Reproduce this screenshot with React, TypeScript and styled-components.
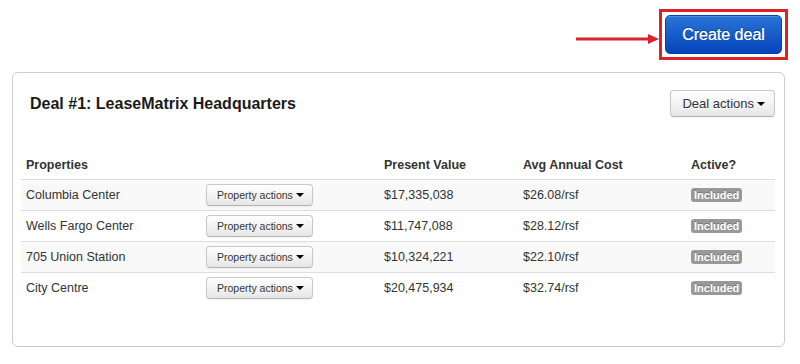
import React from "react";
import styled, { createGlobalStyle } from "styled-components";

const GlobalStyle = createGlobalStyle`
  html, body { margin: 0; padding: 0; background: #ffffff; }
  body {
    font-family: "Liberation Sans", Arial, Helvetica, sans-serif;
    color: #333333;
    -webkit-font-smoothing: antialiased;
  }
  * { box-sizing: border-box; }
`;

const Page = styled.div`
  width: 800px;
  padding: 0 12px;
`;

const TopBar = styled.div`
  display: flex;
  justify-content: flex-end;
  align-items: flex-start;
  padding-top: 9px;
`;

const ArrowSvg = styled.svg`
  display: block;
  margin-top: 24px;
`;

const Highlight = styled.div`
  border: 3px solid #dc2226;
  padding: 3px;
  display: flex;
`;

const PrimaryButton = styled.button`
  width: 117px;
  height: 39px;
  border: 1px solid #0a3fae;
  border-radius: 5px;
  background: linear-gradient(#2a74d6, #0444bd);
  color: #ffffff;
  font-family: "Liberation Sans", Arial, sans-serif;
  font-size: 16px;
  text-shadow: 0 -1px 0 rgba(0, 0, 0, 0.3), 0 0 0.4px #ffffff;
  box-shadow: inset 0 1px 0 rgba(255, 255, 255, 0.2);
  padding: 0;
  cursor: pointer;
`;

const Panel = styled.section`
  margin: 12px 3px 0 0;
  border: 1px solid #cccccc;
  border-radius: 6px;
  padding: 17px 9px 43px 8px;
`;

const PanelHeader = styled.div`
  display: flex;
  justify-content: space-between;
  align-items: center;
  height: 27px;
  padding-left: 9px;
`;

const Title = styled.h2`
  margin: 0;
  font-size: 16px;
  font-weight: bold;
  color: #1a1a1a;
`;

const DropButton = styled.button<{ $small?: boolean }>`
  display: inline-flex;
  align-items: center;
  height: ${(p) => (p.$small ? "22px" : "27px")};
  padding: ${(p) => (p.$small ? "0 8px 0 10px" : "0 9px 0 11px")};
  font-family: "Liberation Sans", Arial, sans-serif;
  font-size: ${(p) => (p.$small ? "10.5px" : "13px")};
  color: #333333;
  background: linear-gradient(#ffffff, #e6e6e6);
  border: 1px solid #c8c8c8;
  border-bottom-color: #b3b3b3;
  border-radius: 4px;
  box-shadow: inset 0 1px 0 rgba(255, 255, 255, 0.3), 0 1px 2px rgba(0, 0, 0, 0.05);
  text-shadow: 0 1px 1px rgba(255, 255, 255, 0.75);
  cursor: pointer;
`;

const Caret = styled.span`
  display: inline-block;
  width: 0;
  height: 0;
  margin-left: 3px;
  border-top: 4px solid #000000;
  border-left: 4px solid transparent;
  border-right: 4px solid transparent;
`;

const Table = styled.div`
  margin-top: 31px;
`;

const Row = styled.div<{ $striped?: boolean; $head?: boolean }>`
  display: grid;
  grid-template-columns: 180px 178px 139px 168px 1fr;
  align-items: center;
  height: 31px;
  border-top: ${(p) => (p.$head ? "none" : "1px solid #dddddd")};
  background: ${(p) => (p.$striped ? "#f9f9f9" : "transparent")};
  font-size: 12.5px;
  font-weight: ${(p) => (p.$head ? "bold" : "normal")};
  padding-top: ${(p) => (p.$head ? "2px" : "0")};
`;

const Cell = styled.div`
  padding-left: 5px;
  white-space: nowrap;
`;

const Badge = styled.span`
  display: inline-block;
  padding: 0 3px;
  height: 14px;
  line-height: 14px;
  font-size: 11px;
  font-weight: bold;
  color: #ffffff;
  background: #999999;
  border-radius: 3px;
  text-shadow: 0 -1px 0 rgba(0, 0, 0, 0.25);
  vertical-align: middle;
`;

const rows = [
  { name: "Columbia Center", pv: "$17,335,038", cost: "$26.08/rsf" },
  { name: "Wells Fargo Center", pv: "$11,747,088", cost: "$28.12/rsf" },
  { name: "705 Union Station", pv: "$10,324,221", cost: "$22.10/rsf" },
  { name: "City Centre", pv: "$20,475,934", cost: "$32.74/rsf" },
];

export default function App() {
  return (
    <>
      <GlobalStyle />
      <Page>
        <TopBar>
          <ArrowSvg width="83" height="12" viewBox="0 0 83 12">
            <line x1="0" y1="6" x2="74" y2="6" stroke="#dc2226" strokeWidth="3" />
            <polygon points="72,1 83,6 72,11" fill="#dc2226" />
          </ArrowSvg>
          <Highlight>
            <PrimaryButton>Create deal</PrimaryButton>
          </Highlight>
        </TopBar>
        <Panel>
          <PanelHeader>
            <Title>Deal #1: LeaseMatrix Headquarters</Title>
            <DropButton>
              Deal actions <Caret />
            </DropButton>
          </PanelHeader>
          <Table>
            <Row $head>
              <Cell>Properties</Cell>
              <Cell />
              <Cell>Present Value</Cell>
              <Cell>Avg Annual Cost</Cell>
              <Cell>Active?</Cell>
            </Row>
            {rows.map((r, i) => (
              <Row key={r.name} $striped={i % 2 === 0}>
                <Cell>{r.name}</Cell>
                <Cell>
                  <DropButton $small>
                    Property actions <Caret />
                  </DropButton>
                </Cell>
                <Cell>{r.pv}</Cell>
                <Cell>{r.cost}</Cell>
                <Cell>
                  <Badge>Included</Badge>
                </Cell>
              </Row>
            ))}
          </Table>
        </Panel>
      </Page>
    </>
  );
}
